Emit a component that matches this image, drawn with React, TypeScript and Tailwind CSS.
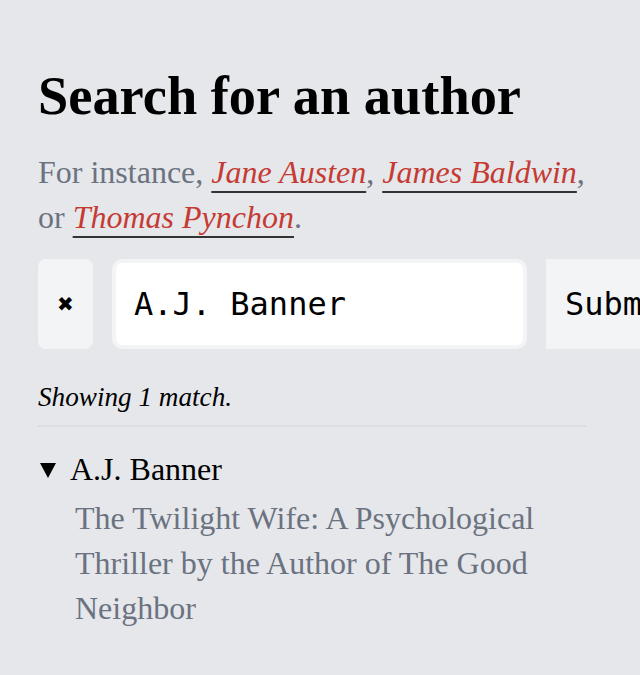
import React, { useState } from 'react';

const examples = ['Jane Austen', 'James Baldwin', 'Thomas Pynchon'];

function AuthorLink({ name }: { name: string }) {
  return (
    <a
      href="#"
      className="italic text-[#c53b33] underline decoration-[#333333] decoration-2 underline-offset-[8px]"
    >
      {name}
    </a>
  );
}

export default function App() {
  const [query, setQuery] = useState('A.J. Banner');
  const [open, setOpen] = useState(true);

  return (
    <div className="min-h-[675px] w-full overflow-hidden bg-[#e5e7eb] font-['Liberation_Serif',serif] text-black">
      <div className="w-[548px] ml-[38px] pt-[64px]">
        <h1 className="text-[54.4px] leading-[1.2] font-bold">Search for an author</h1>

        <p className="mt-[21px] text-[32px] leading-[45px] text-[#6b7280]">
          For instance, <AuthorLink name={examples[0]} />, <AuthorLink name={examples[1]} />, or{' '}
          <AuthorLink name={examples[2]} />.
        </p>

        <form className="mt-[19px] flex gap-[19px] h-[90px]" onSubmit={(e) => e.preventDefault()}>
          <button
            type="button"
            onClick={() => setQuery('')}
            className="w-[55px] shrink-0 rounded-[8px] bg-[#f3f4f6] flex items-center justify-center font-['DejaVu_Sans',sans-serif] text-[20px] text-black"
          >
            ✖
          </button>
          <input
            value={query}
            onChange={(e) => setQuery(e.target.value)}
            className="w-[415px] shrink-0 rounded-[10px] border-4 border-[#f3f4f6] bg-white pl-[18px] font-['DejaVu_Sans_Mono',monospace] text-[32px] text-black outline-none"
          />
          <button
            type="submit"
            className="shrink-0 bg-[#f3f4f6] px-[19px] font-['DejaVu_Sans_Mono',monospace] text-[32px] text-black"
          >
            Submit
          </button>
        </form>

        <p className="mt-[28px] text-[27.2px] leading-[1.5] italic">Showing 1 match.</p>
        <hr className="mt-[7px] border-0 h-[2px] bg-[#dcdee2]" />

        <div className="mt-[20px] text-[32px] leading-[45px]">
          <button className="flex items-center text-left" onClick={() => setOpen(!open)}>
            <svg
              width="16"
              height="15"
              viewBox="0 0 16 15"
              className={`ml-[2px] mr-[14px] mt-[2px] ${open ? '' : '-rotate-90'}`}
            >
              <path d="M0 0 H16 L8 15 Z" fill="black" />
            </svg>
            <span>A.J. Banner</span>
          </button>
          {open && (
            <p className="pl-[37px] mt-[4px] text-[#6b7280]">
              The Twilight Wife: A Psychological Thriller by the Author of The Good Neighbor
            </p>
          )}
        </div>
      </div>
    </div>
  );
}
